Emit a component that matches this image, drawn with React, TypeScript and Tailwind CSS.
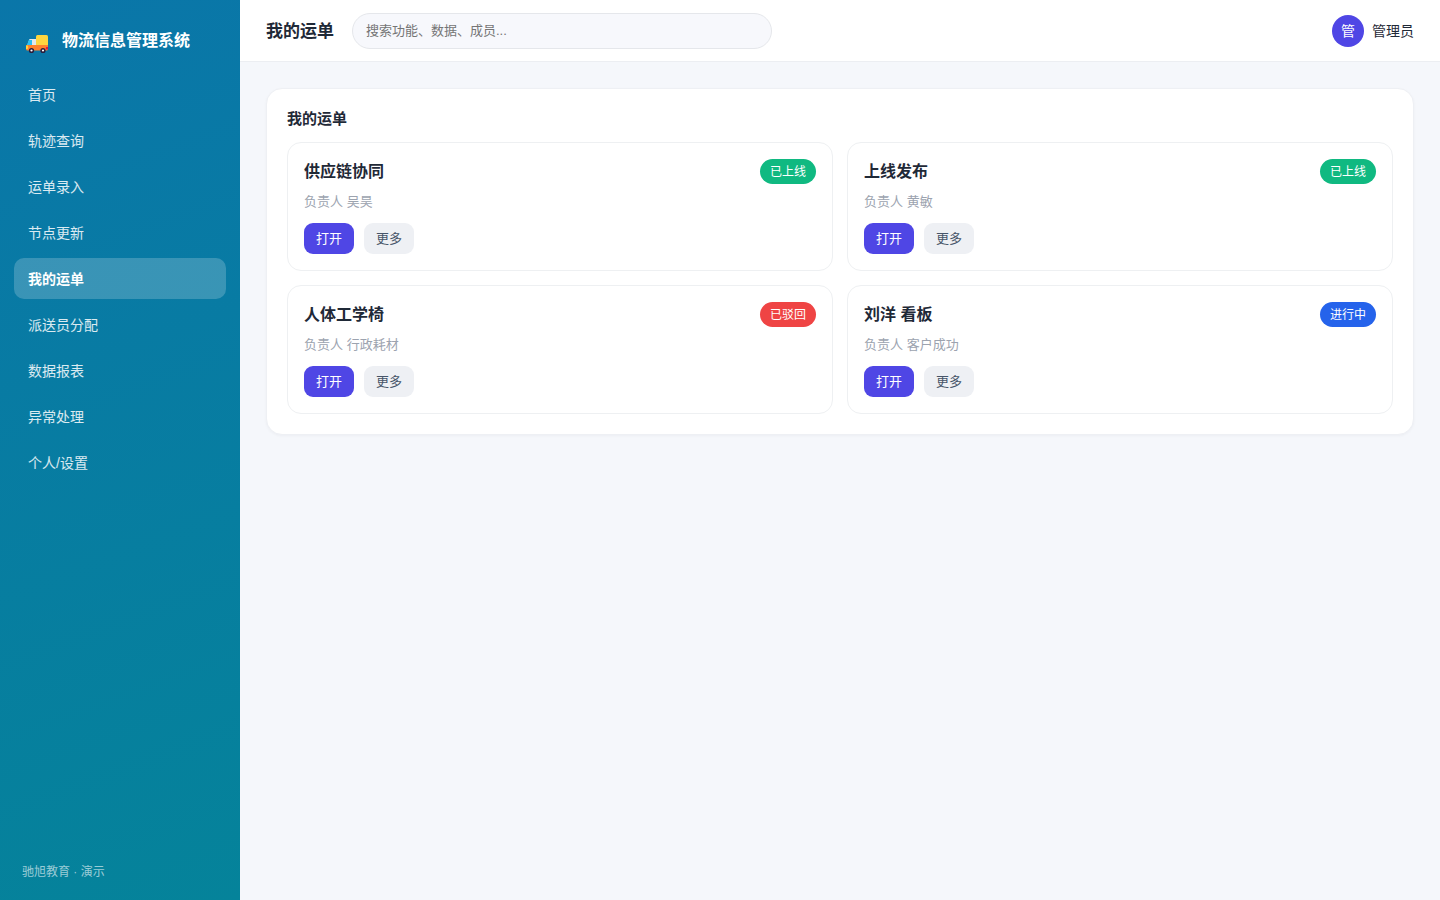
import { useState } from 'react';
import clsx from 'clsx';

const navItems = ['首页', '轨迹查询', '运单录入', '节点更新', '我的运单', '派送员分配', '数据报表', '异常处理', '个人/设置'];

type Status = '已上线' | '已驳回' | '进行中';

const statusColors: Record<Status, string> = {
  已上线: 'bg-[#10b981]',
  已驳回: 'bg-[#ef4444]',
  进行中: 'bg-[#2563eb]',
};

const waybills: { title: string; owner: string; status: Status }[] = [
  { title: '供应链协同', owner: '吴昊', status: '已上线' },
  { title: '上线发布', owner: '黄敏', status: '已上线' },
  { title: '人体工学椅', owner: '行政耗材', status: '已驳回' },
  { title: '刘洋 看板', owner: '客户成功', status: '进行中' },
];

function TruckIcon() {
  return (
    <svg className="w-6 h-7 shrink-0" viewBox="0 0 24 28" aria-hidden="true">
      <path d="M11.500 8q-1.500 0-1.500 1.500V19h12V9.500Q22 8 20.500 8z" fill="#fdd53f" />
      <path d="M3.500 12H10v7H1z" fill="#e3e8ec" />
      <path d="M2.800 13H6v5H1z" fill="#29c0f5" />
      <path d="M1 18h21v4q0 1.500-1.500 1.500h-19Q0 23.500 0 22v-3q0-1 1-1z" fill="#ff822d" />
      <path d="M0 18.500h1.500q.7 0 .7 1.500t-.7 2H0z" fill="#fdd53f" />
      <path d="M22 20h-1.500q-.7 0-.7 1.200t.7 1.300H22z" fill="#e5153f" />
      <circle cx="5.500" cy="23.500" r="2.600" fill="#2b1c3a" />
      <circle cx="5.500" cy="23.500" r="1.100" fill="#fff" />
      <circle cx="17" cy="23.500" r="2.600" fill="#2b1c3a" />
      <circle cx="17" cy="23.500" r="1.100" fill="#fff" />
    </svg>
  );
}

function Sidebar({ active, onSelect }: { active: string; onSelect: (name: string) => void }) {
  return (
    <aside className="w-60 shrink-0 flex flex-col px-[14px] pt-5 pb-[19px] text-white bg-[linear-gradient(160deg,#0a76a9,#05839a)]">
      <div className="flex items-center gap-3 h-[42px] px-3 mb-3">
        <TruckIcon />
        <span className="text-base font-bold">物流信息管理系统</span>
      </div>
      <nav className="flex flex-col gap-[5px]">
        {navItems.map((item) => (
          <a
            key={item}
            href="#"
            onClick={(e) => {
              e.preventDefault();
              onSelect(item);
            }}
            className={clsx(
              'h-[41px] flex items-center px-[14px] rounded-[10px] text-sm',
              item === active ? 'bg-white/20 font-bold' : 'text-white/85 hover:bg-white/10'
            )}
          >
            {item}
          </a>
        ))}
      </nav>
      <div className="mt-auto px-2 text-xs leading-[18px] text-white/60">驰旭教育 · 演示</div>
    </aside>
  );
}

function Topbar({ title }: { title: string }) {
  const [keyword, setKeyword] = useState('');

  return (
    <header className="flex items-center gap-[18px] px-[26px] h-[62px] bg-white border-b border-[#eceef2]">
      <h1 className="pt-0.5 text-[17px] font-bold">{title}</h1>
      <input
        type="search"
        aria-label="搜索"
        value={keyword}
        onChange={(e) => setKeyword(e.target.value)}
        placeholder="搜索功能、数据、成员..."
        className="w-full max-w-[420px] h-9 px-[13px] rounded-full border border-[#e5e7eb] bg-[#f7f8fc] text-[13px] outline-none placeholder:text-[#757575]"
      />
      <div className="ml-auto flex items-center gap-2 text-sm shrink-0">
        <div className="w-8 h-8 rounded-full bg-[#4f46e5] text-white flex items-center justify-center">管</div>
        <span>管理员</span>
      </div>
    </header>
  );
}

function WaybillCard({ title, owner, status }: { title: string; owner: string; status: Status }) {
  return (
    <article className="p-4 rounded-[14px] border border-[#eef0f2]">
      <div className="flex items-center justify-between">
        <h3 className="pt-px text-base font-bold leading-6">{title}</h3>
        <span className={clsx('px-[10px] pt-px rounded-full text-xs leading-6 text-white', statusColors[status])}>
          {status}
        </span>
      </div>
      <p className="mt-2 mb-3 text-[13px] leading-[19px] text-[#9ca3af]">负责人 {owner}</p>
      <div className="flex gap-[10px]">
        <button type="button" className="px-3 rounded-[9px] text-[13px] leading-[31px] bg-[#4f46e5] text-white">
          打开
        </button>
        <button type="button" className="px-3 rounded-[9px] text-[13px] leading-[31px] bg-[#eef0f4] text-[#475569]">
          更多
        </button>
      </div>
    </article>
  );
}

export default function App() {
  const [active, setActive] = useState('我的运单');

  return (
    <div className="min-h-screen flex bg-[#f5f7fb] text-[#1f2937] font-['Liberation_Sans','Noto_Sans_CJK_SC',sans-serif]">
      <Sidebar active={active} onSelect={setActive} />
      <div className="flex-1 min-w-0">
        <Topbar title={active} />
        <main className="p-[26px]">
          <section className="p-5 rounded-2xl border border-[#eef0f4] bg-white shadow-[0_1px_3px_rgba(15,23,42,0.04)]">
            <h2 className="mb-[14px] text-[15px] font-bold leading-[19px]">{active}</h2>
            <div className="grid grid-cols-2 gap-[14px]">
              {waybills.map((waybill) => (
                <WaybillCard key={waybill.title} {...waybill} />
              ))}
            </div>
          </section>
        </main>
      </div>
    </div>
  );
}
